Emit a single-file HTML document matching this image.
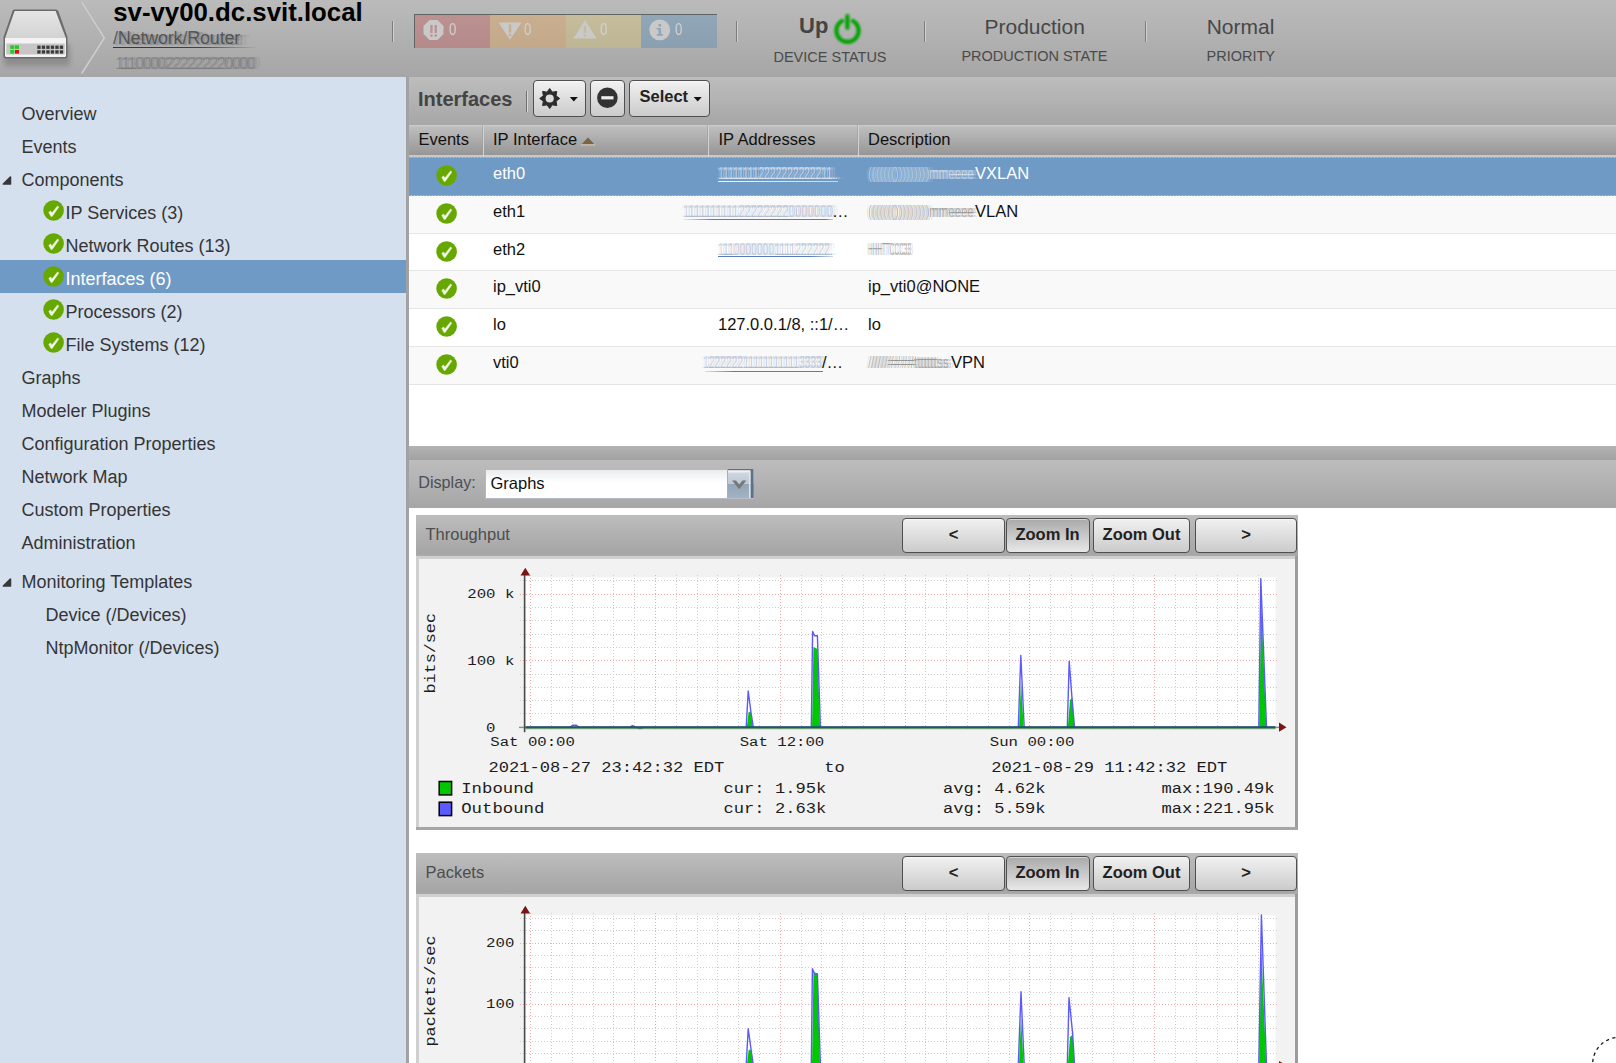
<!DOCTYPE html>
<html><head><meta charset="utf-8"><style>*{box-sizing:border-box;margin:0;padding:0}
html,body{width:1616px;height:1063px;overflow:hidden;background:#fff;font-family:"Liberation Sans",sans-serif}
body{position:relative}
.a{position:absolute}
.t{position:absolute;white-space:pre}
svg{position:absolute;overflow:visible}
</style></head><body>
<div class="a" style="left:0px;top:0px;width:1616px;height:77px;background:linear-gradient(#bbbbbb,#a6a6a6)"></div>
<svg style="left:0;top:0" width="80" height="77" viewBox="0 0 80 77">
<defs><linearGradient id="dtop" x1="0" y1="0" x2="0" y2="1"><stop offset="0" stop-color="#e6e6e6"/><stop offset="1" stop-color="#d2d2d2"/></linearGradient>
<linearGradient id="dfront" x1="0" y1="0" x2="0" y2="1"><stop offset="0" stop-color="#f4f4f4"/><stop offset="1" stop-color="#e8e8e8"/></linearGradient>
<filter id="dsh" x="-30%" y="-30%" width="160%" height="160%"><feGaussianBlur stdDeviation="2.5"/></filter></defs>
<rect x="4" y="44" width="66" height="22" rx="3" fill="#6a6a6a" opacity="0.45" filter="url(#dsh)"/>
<path d="M14 9.5 L56 9.5 Q57.5 9.5 58.3 11 L67.5 37 L67.5 56 Q67.5 58.5 65 58.5 L6 58.5 Q3.5 58.5 3.5 56 L3.5 37 L12.5 11 Q13 9.5 14 9.5 Z" fill="#6b6b6b"/>
<path d="M14.6 11 L55.6 11 L66 38.5 L5 38.5 Z" fill="url(#dtop)"/>
<path d="M5 38 L66 38 L66 55.5 Q66 57 64.5 57 L6.5 57 Q5 57 5 55.5 Z" fill="#f3f3f3"/>
<rect x="6.3" y="43.5" width="58.5" height="11" fill="#c6c6c6"/>
<rect x="10.3" y="45.3" width="4" height="3.6" fill="#22cc22"/><rect x="15" y="45.3" width="4" height="3.6" fill="#22cc22"/>
<rect x="10.3" y="50" width="4" height="3.6" fill="#22cc22"/><rect x="15" y="50" width="4" height="3.6" fill="#dd1111"/>
<g fill="#3a3a3a">
<rect x="37.3" y="45.6" width="3.3" height="3.3"/><rect x="41.8" y="45.6" width="3.3" height="3.3"/><rect x="46.3" y="45.6" width="3.3" height="3.3"/><rect x="50.8" y="45.6" width="3.3" height="3.3"/><rect x="55.3" y="45.6" width="3.3" height="3.3"/><rect x="59.8" y="45.6" width="3.3" height="3.3"/>
<rect x="37.3" y="50.3" width="3.3" height="3.3"/><rect x="41.8" y="50.3" width="3.3" height="3.3"/><rect x="46.3" y="50.3" width="3.3" height="3.3"/><rect x="50.8" y="50.3" width="3.3" height="3.3"/><rect x="55.3" y="50.3" width="3.3" height="3.3"/><rect x="59.8" y="50.3" width="3.3" height="3.3"/>
</g></svg>
<svg style="left:76px;top:0" width="34" height="77" viewBox="0 0 34 77"><path d="M5.5 2.5 L28 38 L5.5 73.5" fill="none" stroke="#cfcfcf" stroke-width="2"/><path d="M4.5 2.5 L27 38 L4.5 73.5" fill="none" stroke="#a5a5a5" stroke-width="1" opacity="0.6"/></svg>
<div class="t" style="left:113.2px;top:0.3px;font-size:25.8px;line-height:25.8px;font-family:'Liberation Sans';color:#000;font-weight:bold;">sv-vy00.dc.svit.local</div>
<div class="t" style="left:113.0px;top:29.3px;font-size:18px;line-height:18px;font-family:'Liberation Sans';color:rgba(60,60,60,0.75);font-weight:normal;text-shadow:2px 1px 1px rgba(80,80,80,0.3),5px 1px 1px rgba(80,80,80,0.2),9px 1px 1px rgba(80,80,80,0.12);letter-spacing:-0.2px">/Network/Router</div>
<div class="a" style="left:113px;top:47px;width:145px;height:1px;background:linear-gradient(90deg,#333,#444 60%,rgba(80,80,80,0))"></div>
<div class="t" style="left:115.0px;top:54.5px;font-size:16.5px;line-height:16.5px;font-family:'Liberation Sans';color:rgba(105,105,105,0.45);font-weight:normal;letter-spacing:-1.75px;text-shadow:2px 0 0 rgba(110,110,110,0.3),5px 0 1px rgba(110,110,110,0.2)">1110000222222220000</div>
<div class="a" style="left:392px;top:21px;width:1px;height:21px;background:#7d7d7d"></div>
<div class="a" style="left:393px;top:21px;width:1px;height:21px;background:#cfcfcf"></div>
<div class="a" style="left:736px;top:21px;width:1px;height:21px;background:#7d7d7d"></div>
<div class="a" style="left:737px;top:21px;width:1px;height:21px;background:#cfcfcf"></div>
<div class="a" style="left:924px;top:21px;width:1px;height:21px;background:#7d7d7d"></div>
<div class="a" style="left:925px;top:21px;width:1px;height:21px;background:#cfcfcf"></div>
<div class="a" style="left:1145px;top:21px;width:1px;height:21px;background:#7d7d7d"></div>
<div class="a" style="left:1146px;top:21px;width:1px;height:21px;background:#cfcfcf"></div>
<div class="a" style="left:414px;top:14px;width:303px;height:34px;background:#5f6466"></div>
<div class="a" style="left:415px;top:15px;width:75px;height:33px;background:linear-gradient(#bc9191,#b48a8a)"></div>
<div class="t" style="left:449.0px;top:21.0px;font-size:16.5px;line-height:16.5px;font-family:'Liberation Sans';color:#d2d2d2;font-weight:normal;transform:scaleX(0.8);transform-origin:left">0</div>
<div class="a" style="left:490px;top:15px;width:76px;height:33px;background:linear-gradient(#caae90,#c3a88a)"></div>
<div class="t" style="left:524.0px;top:21.0px;font-size:16.5px;line-height:16.5px;font-family:'Liberation Sans';color:#d2d2d2;font-weight:normal;transform:scaleX(0.8);transform-origin:left">0</div>
<div class="a" style="left:566px;top:15px;width:75px;height:33px;background:linear-gradient(#c5bd9b,#bdb594)"></div>
<div class="t" style="left:600.0px;top:21.0px;font-size:16.5px;line-height:16.5px;font-family:'Liberation Sans';color:#d2d2d2;font-weight:normal;transform:scaleX(0.8);transform-origin:left">0</div>
<div class="a" style="left:641px;top:15px;width:76px;height:33px;background:linear-gradient(#91a6b6,#8aa0b0)"></div>
<div class="t" style="left:675.0px;top:21.0px;font-size:16.5px;line-height:16.5px;font-family:'Liberation Sans';color:#d2d2d2;font-weight:normal;transform:scaleX(0.8);transform-origin:left">0</div>
<svg style="left:414px;top:14px" width="303" height="34" viewBox="0 0 303 34">
<g fill="#c9c9c9">
<path d="M15.5 6 L23.5 6 L29.5 12 L29.5 20 L23.5 26 L15.5 26 L9.5 20 L9.5 12 Z"/>
<path d="M84.5 8.5 L107.5 8.5 L96 25.8 Z"/>
<path d="M171 6 L182.5 24.5 L159.5 24.5 Z"/>
<circle cx="245.7" cy="15.8" r="10.4"/>
</g>
<g fill="#bc9191"><rect x="16.3" y="11" width="2.3" height="8"/><rect x="20.6" y="11" width="2.3" height="8"/><rect x="16.3" y="20.5" width="2.3" height="2.2"/><rect x="20.6" y="20.5" width="2.3" height="2.2"/></g>
<g fill="#caae90"><rect x="94.8" y="10.5" width="2.4" height="8"/><rect x="94.8" y="20" width="2.4" height="2.3"/></g>
<g fill="#c5bd9b"><rect x="169.8" y="12" width="2.4" height="7"/><rect x="169.8" y="20.3" width="2.4" height="2.3"/></g>
<g fill="#91a6b6"><rect x="244.5" y="14" width="2.6" height="7.5"/><rect x="244.5" y="10" width="2.6" height="2.5"/><rect x="242.7" y="20" width="6.2" height="1.6"/><rect x="242.7" y="14" width="3" height="1.5"/></g>
</svg>
<div class="t" style="left:799.0px;top:15.0px;font-size:22px;line-height:22px;font-family:'Liberation Sans';color:#444;font-weight:bold;">Up</div>
<svg style="left:830px;top:10px" width="36" height="38" viewBox="0 0 36 38"><defs><filter id="glow" x="-30%" y="-30%" width="160%" height="160%"><feGaussianBlur stdDeviation="0.85"/></filter></defs>
<g filter="url(#glow)" fill="none" stroke="#00a400" stroke-width="4.3" stroke-linecap="round"><path d="M12.0 11.0 A11.1 11.1 0 1 0 23.0 11.0"/><path d="M17.4 6.2 L17.4 17.8"/></g></svg>
<div class="t" style="left:530.0px;top:49.5px;font-size:14.5px;line-height:14.5px;font-family:'Liberation Sans';color:#4a4a4a;font-weight:normal;width:600px;text-align:center;">DEVICE STATUS</div>
<div class="t" style="left:734.7px;top:16.0px;font-size:21px;line-height:21px;font-family:'Liberation Sans';color:#474747;font-weight:normal;width:600px;text-align:center;">Production</div>
<div class="t" style="left:734.5px;top:49.4px;font-size:14.5px;line-height:14.5px;font-family:'Liberation Sans';color:#4a4a4a;font-weight:normal;width:600px;text-align:center;">PRODUCTION STATE</div>
<div class="t" style="left:940.5px;top:16.0px;font-size:21px;line-height:21px;font-family:'Liberation Sans';color:#474747;font-weight:normal;width:600px;text-align:center;">Normal</div>
<div class="t" style="left:940.8px;top:49.4px;font-size:14.5px;line-height:14.5px;font-family:'Liberation Sans';color:#4a4a4a;font-weight:normal;width:600px;text-align:center;">PRIORITY</div>
<div class="a" style="left:0px;top:77px;width:406px;height:986px;background:#d4e0ee"></div>
<div class="a" style="left:406px;top:77px;width:3px;height:986px;background:#a2a2a2"></div>
<div class="a" style="left:0px;top:260px;width:406px;height:33px;background:#6f9ac6"></div>
<div class="t" style="left:21.5px;top:104.8px;font-size:18px;line-height:18px;font-family:'Liberation Sans';color:#353535;font-weight:normal;">Overview</div>
<div class="t" style="left:21.5px;top:137.8px;font-size:18px;line-height:18px;font-family:'Liberation Sans';color:#353535;font-weight:normal;">Events</div>
<div class="t" style="left:21.5px;top:170.8px;font-size:18px;line-height:18px;font-family:'Liberation Sans';color:#353535;font-weight:normal;">Components</div>
<svg style="left:2px;top:175px" width="11" height="10" viewBox="0 0 11 10"><path d="M8.4 2.2 L8.4 9 L1.4 9 Z" fill="#383838" stroke="#383838" stroke-width="1.7" stroke-linejoin="round"/></svg>
<div class="t" style="left:65.5px;top:203.8px;font-size:18px;line-height:18px;font-family:'Liberation Sans';color:#353535;font-weight:normal;">IP Services (3)</div>
<svg style="left:42.5px;top:200px" width="21" height="21" viewBox="0 0 21 21"><circle cx="10.6" cy="10.5" r="10.3" fill="#66a800"/><path d="M5.7 12.3 L7.7 10.9 L8.9 13.1 L14.5 5.9 L15.9 7.0 L9.2 16.4 L8.0 16.6 Z" fill="#f2f8e8" stroke="#f2f8e8" stroke-width="0.4" stroke-linejoin="round"/></svg>
<div class="t" style="left:65.5px;top:236.8px;font-size:18px;line-height:18px;font-family:'Liberation Sans';color:#353535;font-weight:normal;">Network Routes (13)</div>
<svg style="left:42.5px;top:233px" width="21" height="21" viewBox="0 0 21 21"><circle cx="10.6" cy="10.5" r="10.3" fill="#66a800"/><path d="M5.7 12.3 L7.7 10.9 L8.9 13.1 L14.5 5.9 L15.9 7.0 L9.2 16.4 L8.0 16.6 Z" fill="#f2f8e8" stroke="#f2f8e8" stroke-width="0.4" stroke-linejoin="round"/></svg>
<div class="t" style="left:65.5px;top:269.8px;font-size:18px;line-height:18px;font-family:'Liberation Sans';color:#fff;font-weight:normal;">Interfaces (6)</div>
<svg style="left:42.5px;top:266px" width="21" height="21" viewBox="0 0 21 21"><circle cx="10.6" cy="10.5" r="10.3" fill="#66a800"/><path d="M5.7 12.3 L7.7 10.9 L8.9 13.1 L14.5 5.9 L15.9 7.0 L9.2 16.4 L8.0 16.6 Z" fill="#f2f8e8" stroke="#f2f8e8" stroke-width="0.4" stroke-linejoin="round"/></svg>
<div class="t" style="left:65.5px;top:302.8px;font-size:18px;line-height:18px;font-family:'Liberation Sans';color:#353535;font-weight:normal;">Processors (2)</div>
<svg style="left:42.5px;top:299px" width="21" height="21" viewBox="0 0 21 21"><circle cx="10.6" cy="10.5" r="10.3" fill="#66a800"/><path d="M5.7 12.3 L7.7 10.9 L8.9 13.1 L14.5 5.9 L15.9 7.0 L9.2 16.4 L8.0 16.6 Z" fill="#f2f8e8" stroke="#f2f8e8" stroke-width="0.4" stroke-linejoin="round"/></svg>
<div class="t" style="left:65.5px;top:335.8px;font-size:18px;line-height:18px;font-family:'Liberation Sans';color:#353535;font-weight:normal;">File Systems (12)</div>
<svg style="left:42.5px;top:332px" width="21" height="21" viewBox="0 0 21 21"><circle cx="10.6" cy="10.5" r="10.3" fill="#66a800"/><path d="M5.7 12.3 L7.7 10.9 L8.9 13.1 L14.5 5.9 L15.9 7.0 L9.2 16.4 L8.0 16.6 Z" fill="#f2f8e8" stroke="#f2f8e8" stroke-width="0.4" stroke-linejoin="round"/></svg>
<div class="t" style="left:21.5px;top:368.8px;font-size:18px;line-height:18px;font-family:'Liberation Sans';color:#353535;font-weight:normal;">Graphs</div>
<div class="t" style="left:21.5px;top:401.8px;font-size:18px;line-height:18px;font-family:'Liberation Sans';color:#353535;font-weight:normal;">Modeler Plugins</div>
<div class="t" style="left:21.5px;top:434.8px;font-size:18px;line-height:18px;font-family:'Liberation Sans';color:#353535;font-weight:normal;">Configuration Properties</div>
<div class="t" style="left:21.5px;top:467.8px;font-size:18px;line-height:18px;font-family:'Liberation Sans';color:#353535;font-weight:normal;">Network Map</div>
<div class="t" style="left:21.5px;top:500.8px;font-size:18px;line-height:18px;font-family:'Liberation Sans';color:#353535;font-weight:normal;">Custom Properties</div>
<div class="t" style="left:21.5px;top:533.8px;font-size:18px;line-height:18px;font-family:'Liberation Sans';color:#353535;font-weight:normal;">Administration</div>
<div class="t" style="left:21.5px;top:572.8px;font-size:18px;line-height:18px;font-family:'Liberation Sans';color:#353535;font-weight:normal;">Monitoring Templates</div>
<svg style="left:2px;top:577px" width="11" height="10" viewBox="0 0 11 10"><path d="M8.4 2.2 L8.4 9 L1.4 9 Z" fill="#383838" stroke="#383838" stroke-width="1.7" stroke-linejoin="round"/></svg>
<div class="t" style="left:45.5px;top:605.8px;font-size:18px;line-height:18px;font-family:'Liberation Sans';color:#353535;font-weight:normal;">Device (/Devices)</div>
<div class="t" style="left:45.5px;top:638.8px;font-size:18px;line-height:18px;font-family:'Liberation Sans';color:#353535;font-weight:normal;">NtpMonitor (/Devices)</div>
<div class="a" style="left:409px;top:77px;width:1207px;height:48px;background:linear-gradient(#bdbdbd,#a7a7a7)"></div>
<div class="t" style="left:418.0px;top:89.1px;font-size:20px;line-height:20px;font-family:'Liberation Sans';color:#444;font-weight:bold;">Interfaces</div>
<div class="a" style="left:526px;top:91px;width:1px;height:21px;background:#6f6f6f"></div>
<div class="a" style="left:527px;top:91px;width:1px;height:21px;background:#d8d8d8"></div>
<div class="a" style="left:533px;top:80px;width:53px;height:37px;border:1px solid #4f4f4f;border-radius:4px;background:linear-gradient(#f1f1f1,#cbcbcb);box-shadow:inset 0 1px 0 rgba(255,255,255,0.5)"></div>
<div class="a" style="left:590px;top:80px;width:35px;height:37px;border:1px solid #4f4f4f;border-radius:4px;background:linear-gradient(#f1f1f1,#cbcbcb);box-shadow:inset 0 1px 0 rgba(255,255,255,0.5)"></div>
<div class="a" style="left:629px;top:80px;width:81px;height:37px;border:1px solid #4f4f4f;border-radius:4px;background:linear-gradient(#f1f1f1,#cbcbcb);box-shadow:inset 0 1px 0 rgba(255,255,255,0.5)"></div>
<svg style="left:0;top:0" width="1616" height="200" viewBox="0 0 1616 200"><path d="M549.70 88.50 L552.34 92.13 L556.77 91.43 L556.07 95.86 L559.70 98.50 L556.07 101.14 L556.77 105.57 L552.34 104.87 L549.70 108.50 L547.06 104.87 L542.63 105.57 L543.33 101.14 L539.70 98.50 L543.33 95.86 L542.63 91.43 L547.06 92.13Z" fill="#2c2c2c" stroke="#2c2c2c" stroke-width="1.0" stroke-linejoin="round"/><circle cx="549.7" cy="98.5" r="4.1" fill="#dcdcdc"/><path d="M569.8 96.9 L577.8 96.9 L573.8 101.6Z" fill="#111"/><circle cx="607.4" cy="97.8" r="10.3" fill="#333"/><rect x="601.3" y="96.2" width="12.2" height="3.2" fill="#eee"/><path d="M693.7 96.9 L701.7 96.9 L697.7 101.6Z" fill="#111"/></svg>
<div class="t" style="left:639.5px;top:87.5px;font-size:16.5px;line-height:16.5px;font-family:'Liberation Sans';color:#222;font-weight:bold;">Select</div>
<div class="a" style="left:409px;top:125px;width:1207px;height:30px;background:linear-gradient(#cdcdcd,#bdbdbd 8%,#969696)"></div>
<div class="a" style="left:409px;top:155px;width:1207px;height:3px;background:#c9c9c9"></div>
<div class="a" style="left:483px;top:125px;width:1px;height:33px;background:#d2d2d2"></div>
<div class="a" style="left:482px;top:125px;width:1px;height:30px;background:#9a9a9a;opacity:0.5"></div>
<div class="a" style="left:708px;top:125px;width:1px;height:33px;background:#d2d2d2"></div>
<div class="a" style="left:707px;top:125px;width:1px;height:30px;background:#9a9a9a;opacity:0.5"></div>
<div class="a" style="left:858px;top:125px;width:1px;height:33px;background:#d2d2d2"></div>
<div class="a" style="left:857px;top:125px;width:1px;height:30px;background:#9a9a9a;opacity:0.5"></div>
<div class="t" style="left:418.5px;top:131.0px;font-size:16.5px;line-height:16.5px;font-family:'Liberation Sans';color:#111;font-weight:normal;">Events</div>
<div class="t" style="left:493.0px;top:131.0px;font-size:16.5px;line-height:16.5px;font-family:'Liberation Sans';color:#111;font-weight:normal;">IP Interface</div>
<svg style="left:580px;top:136px" width="16" height="10" viewBox="0 0 16 10"><path d="M1.4 8.6 L14.6 8.6 L8 1.6Z" fill="#7a6446"/><rect x="1" y="8.2" width="14" height="1.2" fill="#e8dcc8" opacity="0.7"/></svg>
<div class="t" style="left:718.5px;top:131.0px;font-size:16.5px;line-height:16.5px;font-family:'Liberation Sans';color:#111;font-weight:normal;">IP Addresses</div>
<div class="t" style="left:868.0px;top:131.0px;font-size:16.5px;line-height:16.5px;font-family:'Liberation Sans';color:#111;font-weight:normal;">Description</div>
<div class="a" style="left:409px;top:158px;width:1207px;height:38px;background:#6f9ac6"></div>
<svg style="left:435.5px;top:165px" width="21" height="21" viewBox="0 0 21 21"><circle cx="10.6" cy="10.5" r="10.3" fill="#66a800"/><path d="M5.7 12.3 L7.7 10.9 L8.9 13.1 L14.5 5.9 L15.9 7.0 L9.2 16.4 L8.0 16.6 Z" fill="#f2f8e8" stroke="#f2f8e8" stroke-width="0.4" stroke-linejoin="round"/></svg>
<div class="a" style="left:409px;top:196px;width:1207px;height:38px;background:#f9f9f9"></div>
<div class="a" style="left:409px;top:233px;width:1207px;height:1px;background:#e6e6e6"></div>
<svg style="left:435.5px;top:203px" width="21" height="21" viewBox="0 0 21 21"><circle cx="10.6" cy="10.5" r="10.3" fill="#66a800"/><path d="M5.7 12.3 L7.7 10.9 L8.9 13.1 L14.5 5.9 L15.9 7.0 L9.2 16.4 L8.0 16.6 Z" fill="#f2f8e8" stroke="#f2f8e8" stroke-width="0.4" stroke-linejoin="round"/></svg>
<div class="a" style="left:409px;top:234px;width:1207px;height:37px;background:#ffffff"></div>
<div class="a" style="left:409px;top:270px;width:1207px;height:1px;background:#e6e6e6"></div>
<svg style="left:435.5px;top:241px" width="21" height="21" viewBox="0 0 21 21"><circle cx="10.6" cy="10.5" r="10.3" fill="#66a800"/><path d="M5.7 12.3 L7.7 10.9 L8.9 13.1 L14.5 5.9 L15.9 7.0 L9.2 16.4 L8.0 16.6 Z" fill="#f2f8e8" stroke="#f2f8e8" stroke-width="0.4" stroke-linejoin="round"/></svg>
<div class="a" style="left:409px;top:271px;width:1207px;height:38px;background:#f9f9f9"></div>
<div class="a" style="left:409px;top:308px;width:1207px;height:1px;background:#e6e6e6"></div>
<svg style="left:435.5px;top:278px" width="21" height="21" viewBox="0 0 21 21"><circle cx="10.6" cy="10.5" r="10.3" fill="#66a800"/><path d="M5.7 12.3 L7.7 10.9 L8.9 13.1 L14.5 5.9 L15.9 7.0 L9.2 16.4 L8.0 16.6 Z" fill="#f2f8e8" stroke="#f2f8e8" stroke-width="0.4" stroke-linejoin="round"/></svg>
<div class="a" style="left:409px;top:309px;width:1207px;height:38px;background:#ffffff"></div>
<div class="a" style="left:409px;top:346px;width:1207px;height:1px;background:#e6e6e6"></div>
<svg style="left:435.5px;top:316px" width="21" height="21" viewBox="0 0 21 21"><circle cx="10.6" cy="10.5" r="10.3" fill="#66a800"/><path d="M5.7 12.3 L7.7 10.9 L8.9 13.1 L14.5 5.9 L15.9 7.0 L9.2 16.4 L8.0 16.6 Z" fill="#f2f8e8" stroke="#f2f8e8" stroke-width="0.4" stroke-linejoin="round"/></svg>
<div class="a" style="left:409px;top:347px;width:1207px;height:38px;background:#f9f9f9"></div>
<div class="a" style="left:409px;top:384px;width:1207px;height:1px;background:#e6e6e6"></div>
<svg style="left:435.5px;top:354px" width="21" height="21" viewBox="0 0 21 21"><circle cx="10.6" cy="10.5" r="10.3" fill="#66a800"/><path d="M5.7 12.3 L7.7 10.9 L8.9 13.1 L14.5 5.9 L15.9 7.0 L9.2 16.4 L8.0 16.6 Z" fill="#f2f8e8" stroke="#f2f8e8" stroke-width="0.4" stroke-linejoin="round"/></svg>
<div class="a" style="left:409px;top:157px;width:1207px;height:1px;background:repeating-linear-gradient(90deg,#7fa5d2 0 2px,#a9c2e2 2px 3px)"></div>
<div class="a" style="left:409px;top:195px;width:1207px;height:1px;background:repeating-linear-gradient(90deg,#7fa5d2 0 2px,#a9c2e2 2px 3px)"></div>
<div class="t" style="left:493.0px;top:164.8px;font-size:16.5px;line-height:16.5px;font-family:'Liberation Sans';color:#fff;font-weight:normal;">eth0</div>
<div class="t" style="left:493.0px;top:202.8px;font-size:16.5px;line-height:16.5px;font-family:'Liberation Sans';color:#111;font-weight:normal;">eth1</div>
<div class="t" style="left:493.0px;top:240.8px;font-size:16.5px;line-height:16.5px;font-family:'Liberation Sans';color:#111;font-weight:normal;">eth2</div>
<div class="t" style="left:493.0px;top:277.8px;font-size:16.5px;line-height:16.5px;font-family:'Liberation Sans';color:#111;font-weight:normal;">ip_vti0</div>
<div class="t" style="left:493.0px;top:315.8px;font-size:16.5px;line-height:16.5px;font-family:'Liberation Sans';color:#111;font-weight:normal;">lo</div>
<div class="t" style="left:493.0px;top:353.8px;font-size:16.5px;line-height:16.5px;font-family:'Liberation Sans';color:#111;font-weight:normal;">vti0</div>
<svg style="left:0;top:0" width="1616" height="400" viewBox="0 0 1616 400"><text x="718.0" y="178.8" font-family="Liberation Sans" font-size="16.5" textLength="120" lengthAdjust="spacingAndGlyphs" fill="rgb(255,255,255)" fill-opacity="0.550">111111112222222222211..</text><text x="720.5" y="178.8" font-family="Liberation Sans" font-size="16.5" textLength="120" lengthAdjust="spacingAndGlyphs" fill="rgb(255,255,255)" fill-opacity="0.303">111111112222222222211..</text><text x="723.0" y="178.8" font-family="Liberation Sans" font-size="16.5" textLength="120" lengthAdjust="spacingAndGlyphs" fill="rgb(255,255,255)" fill-opacity="0.193">111111112222222222211..</text><text x="716.0" y="178.8" font-family="Liberation Sans" font-size="16.5" textLength="120" lengthAdjust="spacingAndGlyphs" fill="rgb(255,255,255)" fill-opacity="0.165">111111112222222222211..</text></svg>
<div class="a" style="left:718px;top:181px;width:120px;height:1px;background:linear-gradient(90deg,rgba(255,255,255,0.9),rgba(255,255,255,0.6))"></div>
<svg style="left:0;top:0" width="1616" height="400" viewBox="0 0 1616 400"><text x="868.0" y="178.8" font-family="Liberation Sans" font-size="16.5" textLength="106" lengthAdjust="spacingAndGlyphs" fill="rgb(255,255,255)" fill-opacity="0.500">((((((()))))))))mmeeee</text><text x="870.5" y="178.8" font-family="Liberation Sans" font-size="16.5" textLength="106" lengthAdjust="spacingAndGlyphs" fill="rgb(255,255,255)" fill-opacity="0.275">((((((()))))))))mmeeee</text><text x="873.0" y="178.8" font-family="Liberation Sans" font-size="16.5" textLength="106" lengthAdjust="spacingAndGlyphs" fill="rgb(255,255,255)" fill-opacity="0.175">((((((()))))))))mmeeee</text><text x="866.0" y="178.8" font-family="Liberation Sans" font-size="16.5" textLength="106" lengthAdjust="spacingAndGlyphs" fill="rgb(255,255,255)" fill-opacity="0.150">((((((()))))))))mmeeee</text></svg>
<div class="t" style="left:975.0px;top:164.8px;font-size:16.5px;line-height:16.5px;font-family:'Liberation Sans';color:#fff;font-weight:normal;">VXLAN</div>
<svg style="left:0;top:0" width="1616" height="400" viewBox="0 0 1616 400"><text x="683.0" y="216.8" font-family="Liberation Sans" font-size="16.5" textLength="150" lengthAdjust="spacingAndGlyphs" fill="rgb(120,140,180)" fill-opacity="0.380">1111111111222222220000000</text><text x="685.5" y="216.8" font-family="Liberation Sans" font-size="16.5" textLength="150" lengthAdjust="spacingAndGlyphs" fill="rgb(120,140,180)" fill-opacity="0.209">1111111111222222220000000</text><text x="688.0" y="216.8" font-family="Liberation Sans" font-size="16.5" textLength="150" lengthAdjust="spacingAndGlyphs" fill="rgb(120,140,180)" fill-opacity="0.133">1111111111222222220000000</text><text x="681.0" y="216.8" font-family="Liberation Sans" font-size="16.5" textLength="150" lengthAdjust="spacingAndGlyphs" fill="rgb(120,140,180)" fill-opacity="0.114">1111111111222222220000000</text></svg>
<div class="a" style="left:683px;top:219px;width:150px;height:1px;background:linear-gradient(90deg,rgba(80,115,170,0.1),#5a7db5 20%,#5a7db5 95%,rgba(80,115,170,0.3))"></div>
<div class="t" style="left:832.0px;top:202.8px;font-size:16.5px;line-height:16.5px;font-family:'Liberation Sans';color:#111;font-weight:normal;">…</div>
<svg style="left:0;top:0" width="1616" height="400" viewBox="0 0 1616 400"><text x="868.0" y="216.8" font-family="Liberation Sans" font-size="16.5" textLength="106" lengthAdjust="spacingAndGlyphs" fill="rgb(90,90,90)" fill-opacity="0.420">((((((()))))))))mmeeee</text><text x="870.5" y="216.8" font-family="Liberation Sans" font-size="16.5" textLength="106" lengthAdjust="spacingAndGlyphs" fill="rgb(90,90,90)" fill-opacity="0.231">((((((()))))))))mmeeee</text><text x="873.0" y="216.8" font-family="Liberation Sans" font-size="16.5" textLength="106" lengthAdjust="spacingAndGlyphs" fill="rgb(90,90,90)" fill-opacity="0.147">((((((()))))))))mmeeee</text><text x="866.0" y="216.8" font-family="Liberation Sans" font-size="16.5" textLength="106" lengthAdjust="spacingAndGlyphs" fill="rgb(90,90,90)" fill-opacity="0.126">((((((()))))))))mmeeee</text></svg>
<div class="t" style="left:975.0px;top:202.8px;font-size:16.5px;line-height:16.5px;font-family:'Liberation Sans';color:#111;font-weight:normal;">VLAN</div>
<svg style="left:0;top:0" width="1616" height="400" viewBox="0 0 1616 400"><text x="718.0" y="254.8" font-family="Liberation Sans" font-size="16.5" textLength="115" lengthAdjust="spacingAndGlyphs" fill="rgb(120,140,180)" fill-opacity="0.400">11100000001111222222.</text><text x="720.5" y="254.8" font-family="Liberation Sans" font-size="16.5" textLength="115" lengthAdjust="spacingAndGlyphs" fill="rgb(120,140,180)" fill-opacity="0.220">11100000001111222222.</text><text x="723.0" y="254.8" font-family="Liberation Sans" font-size="16.5" textLength="115" lengthAdjust="spacingAndGlyphs" fill="rgb(120,140,180)" fill-opacity="0.140">11100000001111222222.</text><text x="716.0" y="254.8" font-family="Liberation Sans" font-size="16.5" textLength="115" lengthAdjust="spacingAndGlyphs" fill="rgb(120,140,180)" fill-opacity="0.120">11100000001111222222.</text></svg>
<div class="a" style="left:718px;top:256px;width:115px;height:1px;background:linear-gradient(90deg,#5a7db5,#5a7db5 80%,rgba(90,125,181,0.3))"></div>
<svg style="left:0;top:0" width="1616" height="400" viewBox="0 0 1616 400"><text x="868.0" y="254.8" font-family="Liberation Sans" font-size="16.5" textLength="43" lengthAdjust="spacingAndGlyphs" fill="rgb(90,90,90)" fill-opacity="0.450">HHHTTCCC33</text><text x="870.0" y="254.8" font-family="Liberation Sans" font-size="16.5" textLength="43" lengthAdjust="spacingAndGlyphs" fill="rgb(90,90,90)" fill-opacity="0.225">HHHTTCCC33</text><text x="866.5" y="254.8" font-family="Liberation Sans" font-size="16.5" textLength="43" lengthAdjust="spacingAndGlyphs" fill="rgb(90,90,90)" fill-opacity="0.135">HHHTTCCC33</text></svg>
<div class="t" style="left:868.0px;top:277.8px;font-size:16.5px;line-height:16.5px;font-family:'Liberation Sans';color:#111;font-weight:normal;">ip_vti0@NONE</div>
<div class="t" style="left:718.0px;top:315.8px;font-size:16.5px;line-height:16.5px;font-family:'Liberation Sans';color:#111;font-weight:normal;">127.0.0.1/8, ::1/…</div>
<div class="t" style="left:868.0px;top:315.8px;font-size:16.5px;line-height:16.5px;font-family:'Liberation Sans';color:#111;font-weight:normal;">lo</div>
<svg style="left:0;top:0" width="1616" height="400" viewBox="0 0 1616 400"><text x="703.0" y="367.8" font-family="Liberation Sans" font-size="16.5" textLength="119" lengthAdjust="spacingAndGlyphs" fill="rgb(120,140,180)" fill-opacity="0.380">1222222111111111113333</text><text x="705.5" y="367.8" font-family="Liberation Sans" font-size="16.5" textLength="119" lengthAdjust="spacingAndGlyphs" fill="rgb(120,140,180)" fill-opacity="0.209">1222222111111111113333</text><text x="708.0" y="367.8" font-family="Liberation Sans" font-size="16.5" textLength="119" lengthAdjust="spacingAndGlyphs" fill="rgb(120,140,180)" fill-opacity="0.133">1222222111111111113333</text><text x="701.0" y="367.8" font-family="Liberation Sans" font-size="16.5" textLength="119" lengthAdjust="spacingAndGlyphs" fill="rgb(120,140,180)" fill-opacity="0.114">1222222111111111113333</text></svg>
<div class="t" style="left:822.0px;top:353.8px;font-size:16.5px;line-height:16.5px;font-family:'Liberation Sans';color:#111;font-weight:normal;">/…</div>
<div class="a" style="left:705px;top:371px;width:118px;height:1px;background:linear-gradient(90deg,rgba(90,125,181,0.2),#5a7db5 25%,#5a7db5)"></div>
<svg style="left:0;top:0" width="1616" height="400" viewBox="0 0 1616 400"><text x="868.0" y="367.8" font-family="Liberation Sans" font-size="16.5" textLength="81" lengthAdjust="spacingAndGlyphs" fill="rgb(90,90,90)" fill-opacity="0.420">//////####tttttttss</text><text x="870.5" y="367.8" font-family="Liberation Sans" font-size="16.5" textLength="81" lengthAdjust="spacingAndGlyphs" fill="rgb(90,90,90)" fill-opacity="0.231">//////####tttttttss</text><text x="873.0" y="367.8" font-family="Liberation Sans" font-size="16.5" textLength="81" lengthAdjust="spacingAndGlyphs" fill="rgb(90,90,90)" fill-opacity="0.147">//////####tttttttss</text><text x="866.0" y="367.8" font-family="Liberation Sans" font-size="16.5" textLength="81" lengthAdjust="spacingAndGlyphs" fill="rgb(90,90,90)" fill-opacity="0.126">//////####tttttttss</text></svg>
<div class="t" style="left:951.0px;top:353.8px;font-size:16.5px;line-height:16.5px;font-family:'Liberation Sans';color:#111;font-weight:normal;">VPN</div>
<div class="a" style="left:409px;top:385px;width:1207px;height:61px;background:#fff"></div>
<div class="a" style="left:409px;top:446px;width:1207px;height:14px;background:linear-gradient(#b3b3b3,#a2a2a2)"></div>
<div class="a" style="left:409px;top:460px;width:1207px;height:48px;background:linear-gradient(#bdbdbd,#a6a6a6)"></div>
<div class="t" style="left:418.2px;top:473.8px;font-size:16.2px;line-height:16.2px;font-family:'Liberation Sans';color:#4b4f56;font-weight:normal;">Display:</div>
<div class="a" style="left:485px;top:469px;width:243px;height:30px;background:linear-gradient(#e9eced,#ffffff 45%);border:1px solid #b5b8c8"></div>
<div class="t" style="left:490.5px;top:474.8px;font-size:16.5px;line-height:16.5px;font-family:'Liberation Sans';color:#111;font-weight:normal;">Graphs</div>
<svg style="left:727px;top:469px" width="28" height="30" viewBox="0 0 28 30">
<defs><linearGradient id="trg" x1="0" y1="0" x2="0" y2="1"><stop offset="0" stop-color="#d3dae2"/><stop offset="0.5" stop-color="#bfc9d4"/><stop offset="0.5" stop-color="#93a5b6"/><stop offset="1" stop-color="#a2b3c4"/></linearGradient></defs>
<rect x="0" y="0" width="27" height="30" fill="url(#trg)"/>
<rect x="0" y="0" width="26" height="1" fill="#5d7188"/>
<rect x="23.5" y="0" width="3" height="30" fill="#5d7188"/>
<rect x="22" y="2" width="1.5" height="28" fill="#e2e6ea"/>
<rect x="0" y="2" width="22" height="1.5" fill="#eef1f4"/>
<rect x="0" y="0" width="1" height="30" fill="#a8aec0"/>
<rect x="0" y="29" width="27" height="1" fill="#b8bccc"/>
<path d="M5 11.5 L9 11.5 L12.2 15.6 L15.4 11.5 L19.4 11.5 L12.2 20.3 Z" fill="#787878"/>
</svg>
<div class="a" style="left:409px;top:508px;width:1207px;height:555px;background:#fff"></div>
<div class="a" style="left:416px;top:515px;width:882px;height:39px;background:linear-gradient(#bdbdbd,#a5a5a5)"></div>
<div class="a" style="left:416px;top:554px;width:882px;height:2px;background:#a9a9a9"></div>
<div class="t" style="left:425.5px;top:525.5px;font-size:16.5px;line-height:16.5px;font-family:'Liberation Sans';color:#4d4d4d;font-weight:normal;">Throughput</div>
<div class="a" style="left:902px;top:518px;width:103px;height:35px;border:1px solid #4f4f4f;border-radius:4px;background:linear-gradient(#f1f1f1,#cbcbcb);box-shadow:inset 0 1px 0 rgba(255,255,255,0.5)"></div>
<div class="a" style="left:1006px;top:518px;width:84px;height:35px;border:1px solid #4f4f4f;border-radius:4px;background:linear-gradient(#a9a9a9,#e8e8e8);box-shadow:inset 0 1px 0 rgba(255,255,255,0.5)"></div>
<div class="a" style="left:1093px;top:518px;width:97px;height:35px;border:1px solid #4f4f4f;border-radius:4px;background:linear-gradient(#f1f1f1,#cbcbcb);box-shadow:inset 0 1px 0 rgba(255,255,255,0.5)"></div>
<div class="a" style="left:1195px;top:518px;width:102px;height:35px;border:1px solid #4f4f4f;border-radius:4px;background:linear-gradient(#f1f1f1,#cbcbcb);box-shadow:inset 0 1px 0 rgba(255,255,255,0.5)"></div>
<div class="t" style="left:653.5px;top:525.5px;font-size:16.5px;line-height:16.5px;font-family:'Liberation Sans';color:#222;font-weight:bold;width:600px;text-align:center;">&lt;</div>
<div class="t" style="left:747.5px;top:525.5px;font-size:16.5px;line-height:16.5px;font-family:'Liberation Sans';color:#222;font-weight:bold;width:600px;text-align:center;">Zoom In</div>
<div class="t" style="left:841.5px;top:525.5px;font-size:16.5px;line-height:16.5px;font-family:'Liberation Sans';color:#222;font-weight:bold;width:600px;text-align:center;">Zoom Out</div>
<div class="t" style="left:946.0px;top:525.5px;font-size:16.5px;line-height:16.5px;font-family:'Liberation Sans';color:#222;font-weight:bold;width:600px;text-align:center;">&gt;</div>
<div class="a" style="left:416px;top:556px;width:882px;height:274px;background:#cfcfcf"></div>
<div class="a" style="left:419px;top:559px;width:876px;height:268px;background:#f2f2f2"></div>
<div class="a" style="left:1295px;top:556px;width:3px;height:274px;background:#9c9c9c"></div>
<div class="a" style="left:416px;top:827px;width:882px;height:3px;background:#a6a6a6"></div>
<svg style="left:0;top:0" width="1616" height="1063" viewBox="0 0 1616 1063"><g transform="translate(0,0)"><rect x="525.5" y="577.5" width="750" height="150" fill="#fff"/><line x1="551.5" y1="575" x2="551.5" y2="731" stroke="#cdcdcd" stroke-width="1" stroke-dasharray="1 2"/><line x1="572.5" y1="575" x2="572.5" y2="731" stroke="#cdcdcd" stroke-width="1" stroke-dasharray="1 2"/><line x1="593.5" y1="575" x2="593.5" y2="731" stroke="#cdcdcd" stroke-width="1" stroke-dasharray="1 2"/><line x1="613.5" y1="575" x2="613.5" y2="731" stroke="#cdcdcd" stroke-width="1" stroke-dasharray="1 2"/><line x1="634.5" y1="575" x2="634.5" y2="731" stroke="#cdcdcd" stroke-width="1" stroke-dasharray="1 2"/><line x1="676.5" y1="575" x2="676.5" y2="731" stroke="#cdcdcd" stroke-width="1" stroke-dasharray="1 2"/><line x1="697.5" y1="575" x2="697.5" y2="731" stroke="#cdcdcd" stroke-width="1" stroke-dasharray="1 2"/><line x1="717.5" y1="575" x2="717.5" y2="731" stroke="#cdcdcd" stroke-width="1" stroke-dasharray="1 2"/><line x1="738.5" y1="575" x2="738.5" y2="731" stroke="#cdcdcd" stroke-width="1" stroke-dasharray="1 2"/><line x1="759.5" y1="575" x2="759.5" y2="731" stroke="#cdcdcd" stroke-width="1" stroke-dasharray="1 2"/><line x1="801.5" y1="575" x2="801.5" y2="731" stroke="#cdcdcd" stroke-width="1" stroke-dasharray="1 2"/><line x1="821.5" y1="575" x2="821.5" y2="731" stroke="#cdcdcd" stroke-width="1" stroke-dasharray="1 2"/><line x1="842.5" y1="575" x2="842.5" y2="731" stroke="#cdcdcd" stroke-width="1" stroke-dasharray="1 2"/><line x1="863.5" y1="575" x2="863.5" y2="731" stroke="#cdcdcd" stroke-width="1" stroke-dasharray="1 2"/><line x1="884.5" y1="575" x2="884.5" y2="731" stroke="#cdcdcd" stroke-width="1" stroke-dasharray="1 2"/><line x1="925.5" y1="575" x2="925.5" y2="731" stroke="#cdcdcd" stroke-width="1" stroke-dasharray="1 2"/><line x1="946.5" y1="575" x2="946.5" y2="731" stroke="#cdcdcd" stroke-width="1" stroke-dasharray="1 2"/><line x1="967.5" y1="575" x2="967.5" y2="731" stroke="#cdcdcd" stroke-width="1" stroke-dasharray="1 2"/><line x1="988.5" y1="575" x2="988.5" y2="731" stroke="#cdcdcd" stroke-width="1" stroke-dasharray="1 2"/><line x1="1009.5" y1="575" x2="1009.5" y2="731" stroke="#cdcdcd" stroke-width="1" stroke-dasharray="1 2"/><line x1="1050.5" y1="575" x2="1050.5" y2="731" stroke="#cdcdcd" stroke-width="1" stroke-dasharray="1 2"/><line x1="1071.5" y1="575" x2="1071.5" y2="731" stroke="#cdcdcd" stroke-width="1" stroke-dasharray="1 2"/><line x1="1092.5" y1="575" x2="1092.5" y2="731" stroke="#cdcdcd" stroke-width="1" stroke-dasharray="1 2"/><line x1="1113.5" y1="575" x2="1113.5" y2="731" stroke="#cdcdcd" stroke-width="1" stroke-dasharray="1 2"/><line x1="1133.5" y1="575" x2="1133.5" y2="731" stroke="#cdcdcd" stroke-width="1" stroke-dasharray="1 2"/><line x1="1175.5" y1="575" x2="1175.5" y2="731" stroke="#cdcdcd" stroke-width="1" stroke-dasharray="1 2"/><line x1="1196.5" y1="575" x2="1196.5" y2="731" stroke="#cdcdcd" stroke-width="1" stroke-dasharray="1 2"/><line x1="1217.5" y1="575" x2="1217.5" y2="731" stroke="#cdcdcd" stroke-width="1" stroke-dasharray="1 2"/><line x1="1237.5" y1="575" x2="1237.5" y2="731" stroke="#cdcdcd" stroke-width="1" stroke-dasharray="1 2"/><line x1="1258.5" y1="575" x2="1258.5" y2="731" stroke="#cdcdcd" stroke-width="1" stroke-dasharray="1 2"/><line x1="520" y1="713.5" x2="1278" y2="713.5" stroke="#cdcdcd" stroke-width="1" stroke-dasharray="1 2"/><line x1="520" y1="700.5" x2="1278" y2="700.5" stroke="#cdcdcd" stroke-width="1" stroke-dasharray="1 2"/><line x1="520" y1="687.5" x2="1278" y2="687.5" stroke="#cdcdcd" stroke-width="1" stroke-dasharray="1 2"/><line x1="520" y1="674.5" x2="1278" y2="674.5" stroke="#cdcdcd" stroke-width="1" stroke-dasharray="1 2"/><line x1="520" y1="647.5" x2="1278" y2="647.5" stroke="#cdcdcd" stroke-width="1" stroke-dasharray="1 2"/><line x1="520" y1="634.5" x2="1278" y2="634.5" stroke="#cdcdcd" stroke-width="1" stroke-dasharray="1 2"/><line x1="520" y1="620.5" x2="1278" y2="620.5" stroke="#cdcdcd" stroke-width="1" stroke-dasharray="1 2"/><line x1="520" y1="607.5" x2="1278" y2="607.5" stroke="#cdcdcd" stroke-width="1" stroke-dasharray="1 2"/><line x1="520" y1="580.5" x2="1278" y2="580.5" stroke="#cdcdcd" stroke-width="1" stroke-dasharray="1 2"/><line x1="530.5" y1="575" x2="530.5" y2="731" stroke="#f0a8a8" stroke-width="1" stroke-dasharray="1 2"/><line x1="655.5" y1="575" x2="655.5" y2="731" stroke="#f0a8a8" stroke-width="1" stroke-dasharray="1 2"/><line x1="780.5" y1="575" x2="780.5" y2="731" stroke="#f0a8a8" stroke-width="1" stroke-dasharray="1 2"/><line x1="905.5" y1="575" x2="905.5" y2="731" stroke="#f0a8a8" stroke-width="1" stroke-dasharray="1 2"/><line x1="1029.5" y1="575" x2="1029.5" y2="731" stroke="#f0a8a8" stroke-width="1" stroke-dasharray="1 2"/><line x1="1154.5" y1="575" x2="1154.5" y2="731" stroke="#f0a8a8" stroke-width="1" stroke-dasharray="1 2"/><line x1="520" y1="660.5" x2="1278" y2="660.5" stroke="#f0a8a8" stroke-width="1" stroke-dasharray="1 2"/><line x1="520" y1="594.5" x2="1278" y2="594.5" stroke="#f0a8a8" stroke-width="1" stroke-dasharray="1 2"/><path d="M746.8 727.2 L748.6 712 L750.6 711.5 L753.2 727.2Z" fill="#00c800"/><path d="M746.2 727.2 L748.2 691 L751 712.5 L753.3 727.2" fill="none" stroke="#5a5aff" stroke-width="1.4" stroke-linejoin="round"/><path d="M812 727.2 L813.4 647 L817.5 649 L820 727.2Z" fill="#00c800"/><path d="M811.3 727.2 L812.6 631.5 L814.6 635.8 L817.4 635.8 L820.4 727.2" fill="none" stroke="#5a5aff" stroke-width="1.4" stroke-linejoin="round"/><path d="M1019 727.2 L1021 680 L1023.6 727.2Z" fill="#00c800"/><path d="M1018.3 727.2 L1020.8 655.5 L1024.2 727.2" fill="none" stroke="#5a5aff" stroke-width="1.4" stroke-linejoin="round"/><path d="M1067.8 727.2 L1070 700 L1072.3 697.5 L1074.5 727.2Z" fill="#00c800"/><path d="M1067.3 727.2 L1069.2 661.2 L1072 698 L1074.5 727.2" fill="none" stroke="#5a5aff" stroke-width="1.4" stroke-linejoin="round"/><path d="M1259.2 727.2 L1261.2 600 L1266.3 727.2Z" fill="#00c800"/><path d="M1258.8 727.2 L1260.8 578.6 L1266.5 727.2" fill="none" stroke="#5a5aff" stroke-width="1.4" stroke-linejoin="round"/><path d="M570 727.2 L572.5 725.3 L576.5 725.3 L579 727.2" fill="none" stroke="#5a5aff" stroke-width="1.4" stroke-linejoin="round"/><path d="M630 727.2 L632.5 725.5 L635 727.2 L640 728.6 L645 727.2" fill="none" stroke="#5a5aff" stroke-width="1.4" stroke-linejoin="round"/><rect x="525.5" y="726.2" width="750" height="2" fill="#1d4f86"/><rect x="525.5" y="728.2" width="750" height="1" fill="#3a8a3a" opacity="0.8"/><rect x="523.8" y="574" width="1.6" height="158.2" fill="#4a4a4a"/><path d="M520.5 575.6 L530.1 575.6 L525.3 567.8Z" fill="#7a1414"/><rect x="519" y="726.7" width="763" height="1.4" fill="#4a4a4a" opacity="0.6"/><path d="M1279 722.6 L1279 731.8 L1286.5 727.2Z" fill="#7a1414"/><text x="467.3" y="598.0" font-family="Liberation Mono" font-size="13.7" textLength="47.0" lengthAdjust="spacingAndGlyphs" fill="#1c1c1c" text-anchor="start">200&#160;k</text><text x="467.3" y="665.1" font-family="Liberation Mono" font-size="13.7" textLength="47.0" lengthAdjust="spacingAndGlyphs" fill="#1c1c1c" text-anchor="start">100&#160;k</text><text x="467.3" y="732.0" font-family="Liberation Mono" font-size="13.7" textLength="47.0" lengthAdjust="spacingAndGlyphs" fill="#1c1c1c" text-anchor="start">&#160;&#160;0&#160;&#160;</text><text transform="translate(434.6,653.3) rotate(-90)" font-family="Liberation Mono" font-size="15.5" textLength="80.5" lengthAdjust="spacingAndGlyphs" fill="#1c1c1c" text-anchor="middle">bits/sec</text><text x="490.3" y="746.0" font-family="Liberation Mono" font-size="13.7" textLength="84.6" lengthAdjust="spacingAndGlyphs" fill="#1c1c1c" text-anchor="start">Sat&#160;00:00</text><text x="739.7" y="746.0" font-family="Liberation Mono" font-size="13.7" textLength="84.6" lengthAdjust="spacingAndGlyphs" fill="#1c1c1c" text-anchor="start">Sat&#160;12:00</text><text x="989.8" y="746.0" font-family="Liberation Mono" font-size="13.7" textLength="84.6" lengthAdjust="spacingAndGlyphs" fill="#1c1c1c" text-anchor="start">Sun&#160;00:00</text></g></svg>
<svg style="left:0;top:0" width="1616" height="1063" viewBox="0 0 1616 1063"><g transform="translate(0,0)"><text x="488.4" y="771.9" font-family="Liberation Mono" font-size="15.4" textLength="236.0" lengthAdjust="spacingAndGlyphs" fill="#1c1c1c" text-anchor="start">2021-08-27&#160;23:42:32&#160;EDT</text><text x="824.3" y="771.9" font-family="Liberation Mono" font-size="15.4" textLength="20.5" lengthAdjust="spacingAndGlyphs" fill="#1c1c1c" text-anchor="start">to</text><text x="991.3" y="771.9" font-family="Liberation Mono" font-size="15.4" textLength="236.0" lengthAdjust="spacingAndGlyphs" fill="#1c1c1c" text-anchor="start">2021-08-29&#160;11:42:32&#160;EDT</text><rect x="439.2" y="781.5" width="12.4" height="13.4" fill="#00c800" stroke="#000" stroke-width="1.5"/><text x="461.2" y="792.5" font-family="Liberation Mono" font-size="15.4" textLength="72.8" lengthAdjust="spacingAndGlyphs" fill="#1c1c1c" text-anchor="start">Inbound</text><text x="723.6" y="792.5" font-family="Liberation Mono" font-size="15.4" textLength="102.6" lengthAdjust="spacingAndGlyphs" fill="#1c1c1c" text-anchor="start">cur:&#160;1.95k</text><text x="943.0" y="792.5" font-family="Liberation Mono" font-size="15.4" textLength="102.6" lengthAdjust="spacingAndGlyphs" fill="#1c1c1c" text-anchor="start">avg:&#160;4.62k</text><text x="1161.6" y="792.5" font-family="Liberation Mono" font-size="15.4" textLength="112.9" lengthAdjust="spacingAndGlyphs" fill="#1c1c1c" text-anchor="start">max:190.49k</text><rect x="439.2" y="802.2" width="12.4" height="13.4" fill="#5a5aff" stroke="#000" stroke-width="1.5"/><text x="461.2" y="813.2" font-family="Liberation Mono" font-size="15.4" textLength="83.2" lengthAdjust="spacingAndGlyphs" fill="#1c1c1c" text-anchor="start">Outbound</text><text x="723.6" y="813.2" font-family="Liberation Mono" font-size="15.4" textLength="102.6" lengthAdjust="spacingAndGlyphs" fill="#1c1c1c" text-anchor="start">cur:&#160;2.63k</text><text x="943.0" y="813.2" font-family="Liberation Mono" font-size="15.4" textLength="102.6" lengthAdjust="spacingAndGlyphs" fill="#1c1c1c" text-anchor="start">avg:&#160;5.59k</text><text x="1161.6" y="813.2" font-family="Liberation Mono" font-size="15.4" textLength="112.9" lengthAdjust="spacingAndGlyphs" fill="#1c1c1c" text-anchor="start">max:221.95k</text></g></svg>
<div class="a" style="left:416px;top:853px;width:882px;height:39px;background:linear-gradient(#bdbdbd,#a5a5a5)"></div>
<div class="a" style="left:416px;top:892px;width:882px;height:2px;background:#a9a9a9"></div>
<div class="t" style="left:425.5px;top:863.5px;font-size:16.5px;line-height:16.5px;font-family:'Liberation Sans';color:#4d4d4d;font-weight:normal;">Packets</div>
<div class="a" style="left:902px;top:856px;width:103px;height:35px;border:1px solid #4f4f4f;border-radius:4px;background:linear-gradient(#f1f1f1,#cbcbcb);box-shadow:inset 0 1px 0 rgba(255,255,255,0.5)"></div>
<div class="a" style="left:1006px;top:856px;width:84px;height:35px;border:1px solid #4f4f4f;border-radius:4px;background:linear-gradient(#a9a9a9,#e8e8e8);box-shadow:inset 0 1px 0 rgba(255,255,255,0.5)"></div>
<div class="a" style="left:1093px;top:856px;width:97px;height:35px;border:1px solid #4f4f4f;border-radius:4px;background:linear-gradient(#f1f1f1,#cbcbcb);box-shadow:inset 0 1px 0 rgba(255,255,255,0.5)"></div>
<div class="a" style="left:1195px;top:856px;width:102px;height:35px;border:1px solid #4f4f4f;border-radius:4px;background:linear-gradient(#f1f1f1,#cbcbcb);box-shadow:inset 0 1px 0 rgba(255,255,255,0.5)"></div>
<div class="t" style="left:653.5px;top:863.5px;font-size:16.5px;line-height:16.5px;font-family:'Liberation Sans';color:#222;font-weight:bold;width:600px;text-align:center;">&lt;</div>
<div class="t" style="left:747.5px;top:863.5px;font-size:16.5px;line-height:16.5px;font-family:'Liberation Sans';color:#222;font-weight:bold;width:600px;text-align:center;">Zoom In</div>
<div class="t" style="left:841.5px;top:863.5px;font-size:16.5px;line-height:16.5px;font-family:'Liberation Sans';color:#222;font-weight:bold;width:600px;text-align:center;">Zoom Out</div>
<div class="t" style="left:946.0px;top:863.5px;font-size:16.5px;line-height:16.5px;font-family:'Liberation Sans';color:#222;font-weight:bold;width:600px;text-align:center;">&gt;</div>
<div class="a" style="left:416px;top:894px;width:882px;height:274px;background:#cfcfcf"></div>
<div class="a" style="left:419px;top:897px;width:876px;height:268px;background:#f2f2f2"></div>
<div class="a" style="left:1295px;top:894px;width:3px;height:274px;background:#9c9c9c"></div>
<div class="a" style="left:416px;top:1165px;width:882px;height:3px;background:#a6a6a6"></div>
<svg style="left:0;top:0" width="1616" height="1063" viewBox="0 0 1616 1063"><g transform="translate(0,338)"><rect x="525.5" y="577.5" width="750" height="150" fill="#fff"/><line x1="551.5" y1="575" x2="551.5" y2="731" stroke="#cdcdcd" stroke-width="1" stroke-dasharray="1 2"/><line x1="572.5" y1="575" x2="572.5" y2="731" stroke="#cdcdcd" stroke-width="1" stroke-dasharray="1 2"/><line x1="593.5" y1="575" x2="593.5" y2="731" stroke="#cdcdcd" stroke-width="1" stroke-dasharray="1 2"/><line x1="613.5" y1="575" x2="613.5" y2="731" stroke="#cdcdcd" stroke-width="1" stroke-dasharray="1 2"/><line x1="634.5" y1="575" x2="634.5" y2="731" stroke="#cdcdcd" stroke-width="1" stroke-dasharray="1 2"/><line x1="676.5" y1="575" x2="676.5" y2="731" stroke="#cdcdcd" stroke-width="1" stroke-dasharray="1 2"/><line x1="697.5" y1="575" x2="697.5" y2="731" stroke="#cdcdcd" stroke-width="1" stroke-dasharray="1 2"/><line x1="717.5" y1="575" x2="717.5" y2="731" stroke="#cdcdcd" stroke-width="1" stroke-dasharray="1 2"/><line x1="738.5" y1="575" x2="738.5" y2="731" stroke="#cdcdcd" stroke-width="1" stroke-dasharray="1 2"/><line x1="759.5" y1="575" x2="759.5" y2="731" stroke="#cdcdcd" stroke-width="1" stroke-dasharray="1 2"/><line x1="801.5" y1="575" x2="801.5" y2="731" stroke="#cdcdcd" stroke-width="1" stroke-dasharray="1 2"/><line x1="821.5" y1="575" x2="821.5" y2="731" stroke="#cdcdcd" stroke-width="1" stroke-dasharray="1 2"/><line x1="842.5" y1="575" x2="842.5" y2="731" stroke="#cdcdcd" stroke-width="1" stroke-dasharray="1 2"/><line x1="863.5" y1="575" x2="863.5" y2="731" stroke="#cdcdcd" stroke-width="1" stroke-dasharray="1 2"/><line x1="884.5" y1="575" x2="884.5" y2="731" stroke="#cdcdcd" stroke-width="1" stroke-dasharray="1 2"/><line x1="925.5" y1="575" x2="925.5" y2="731" stroke="#cdcdcd" stroke-width="1" stroke-dasharray="1 2"/><line x1="946.5" y1="575" x2="946.5" y2="731" stroke="#cdcdcd" stroke-width="1" stroke-dasharray="1 2"/><line x1="967.5" y1="575" x2="967.5" y2="731" stroke="#cdcdcd" stroke-width="1" stroke-dasharray="1 2"/><line x1="988.5" y1="575" x2="988.5" y2="731" stroke="#cdcdcd" stroke-width="1" stroke-dasharray="1 2"/><line x1="1009.5" y1="575" x2="1009.5" y2="731" stroke="#cdcdcd" stroke-width="1" stroke-dasharray="1 2"/><line x1="1050.5" y1="575" x2="1050.5" y2="731" stroke="#cdcdcd" stroke-width="1" stroke-dasharray="1 2"/><line x1="1071.5" y1="575" x2="1071.5" y2="731" stroke="#cdcdcd" stroke-width="1" stroke-dasharray="1 2"/><line x1="1092.5" y1="575" x2="1092.5" y2="731" stroke="#cdcdcd" stroke-width="1" stroke-dasharray="1 2"/><line x1="1113.5" y1="575" x2="1113.5" y2="731" stroke="#cdcdcd" stroke-width="1" stroke-dasharray="1 2"/><line x1="1133.5" y1="575" x2="1133.5" y2="731" stroke="#cdcdcd" stroke-width="1" stroke-dasharray="1 2"/><line x1="1175.5" y1="575" x2="1175.5" y2="731" stroke="#cdcdcd" stroke-width="1" stroke-dasharray="1 2"/><line x1="1196.5" y1="575" x2="1196.5" y2="731" stroke="#cdcdcd" stroke-width="1" stroke-dasharray="1 2"/><line x1="1217.5" y1="575" x2="1217.5" y2="731" stroke="#cdcdcd" stroke-width="1" stroke-dasharray="1 2"/><line x1="1237.5" y1="575" x2="1237.5" y2="731" stroke="#cdcdcd" stroke-width="1" stroke-dasharray="1 2"/><line x1="1258.5" y1="575" x2="1258.5" y2="731" stroke="#cdcdcd" stroke-width="1" stroke-dasharray="1 2"/><line x1="520" y1="715.5" x2="1278" y2="715.5" stroke="#cdcdcd" stroke-width="1" stroke-dasharray="1 2"/><line x1="520" y1="703.5" x2="1278" y2="703.5" stroke="#cdcdcd" stroke-width="1" stroke-dasharray="1 2"/><line x1="520" y1="690.5" x2="1278" y2="690.5" stroke="#cdcdcd" stroke-width="1" stroke-dasharray="1 2"/><line x1="520" y1="678.5" x2="1278" y2="678.5" stroke="#cdcdcd" stroke-width="1" stroke-dasharray="1 2"/><line x1="520" y1="654.5" x2="1278" y2="654.5" stroke="#cdcdcd" stroke-width="1" stroke-dasharray="1 2"/><line x1="520" y1="641.5" x2="1278" y2="641.5" stroke="#cdcdcd" stroke-width="1" stroke-dasharray="1 2"/><line x1="520" y1="629.5" x2="1278" y2="629.5" stroke="#cdcdcd" stroke-width="1" stroke-dasharray="1 2"/><line x1="520" y1="617.5" x2="1278" y2="617.5" stroke="#cdcdcd" stroke-width="1" stroke-dasharray="1 2"/><line x1="520" y1="592.5" x2="1278" y2="592.5" stroke="#cdcdcd" stroke-width="1" stroke-dasharray="1 2"/><line x1="520" y1="580.5" x2="1278" y2="580.5" stroke="#cdcdcd" stroke-width="1" stroke-dasharray="1 2"/><line x1="530.5" y1="575" x2="530.5" y2="731" stroke="#f0a8a8" stroke-width="1" stroke-dasharray="1 2"/><line x1="655.5" y1="575" x2="655.5" y2="731" stroke="#f0a8a8" stroke-width="1" stroke-dasharray="1 2"/><line x1="780.5" y1="575" x2="780.5" y2="731" stroke="#f0a8a8" stroke-width="1" stroke-dasharray="1 2"/><line x1="905.5" y1="575" x2="905.5" y2="731" stroke="#f0a8a8" stroke-width="1" stroke-dasharray="1 2"/><line x1="1029.5" y1="575" x2="1029.5" y2="731" stroke="#f0a8a8" stroke-width="1" stroke-dasharray="1 2"/><line x1="1154.5" y1="575" x2="1154.5" y2="731" stroke="#f0a8a8" stroke-width="1" stroke-dasharray="1 2"/><line x1="520" y1="666.5" x2="1278" y2="666.5" stroke="#f0a8a8" stroke-width="1" stroke-dasharray="1 2"/><line x1="520" y1="605.5" x2="1278" y2="605.5" stroke="#f0a8a8" stroke-width="1" stroke-dasharray="1 2"/><path d="M746.8 727.2 L748.6 712 L750.6 711.5 L753.2 727.2Z" fill="#00c800"/><path d="M746.2 727.2 L748.2 690.8 L751 711 L753.3 727.2" fill="none" stroke="#5a5aff" stroke-width="1.4" stroke-linejoin="round"/><path d="M812 727.2 L813.4 634.2 L817.5 635.2 L820 727.2Z" fill="#00c800"/><path d="M811.3 727.2 L812.4 630.7 L814.6 635.7 L817.4 635.7 L820.4 727.2" fill="none" stroke="#5a5aff" stroke-width="1.4" stroke-linejoin="round"/><path d="M1019 727.2 L1021 677.2 L1023.6 727.2Z" fill="#00c800"/><path d="M1018.3 727.2 L1021 653.7 L1024.2 727.2" fill="none" stroke="#5a5aff" stroke-width="1.4" stroke-linejoin="round"/><path d="M1067.8 727.2 L1070 699.2 L1072.7 696.2 L1074.5 727.2Z" fill="#00c800"/><path d="M1067.3 727.2 L1069 659.8 L1072.7 696 L1074.5 727.2" fill="none" stroke="#5a5aff" stroke-width="1.4" stroke-linejoin="round"/><path d="M1259.2 727.2 L1261.2 607.2 L1266.3 727.2Z" fill="#00c800"/><path d="M1258.8 727.2 L1261.4 576.9 L1266.5 727.2" fill="none" stroke="#5a5aff" stroke-width="1.4" stroke-linejoin="round"/><rect x="525.5" y="726.5" width="750" height="2" fill="#1d4f86"/><rect x="525.5" y="728.5" width="750" height="1" fill="#3a8a3a" opacity="0.8"/><rect x="523.8" y="574" width="1.6" height="158.5" fill="#4a4a4a"/><path d="M520.5 575.6 L530.1 575.6 L525.3 567.8Z" fill="#7a1414"/><rect x="519" y="727.0" width="763" height="1.4" fill="#4a4a4a" opacity="0.6"/><path d="M1279 722.9 L1279 732.1 L1286.5 727.5Z" fill="#7a1414"/><text x="486.1" y="609.1" font-family="Liberation Mono" font-size="13.7" textLength="28.2" lengthAdjust="spacingAndGlyphs" fill="#1c1c1c" text-anchor="start">200</text><text x="486.1" y="670.3" font-family="Liberation Mono" font-size="13.7" textLength="28.2" lengthAdjust="spacingAndGlyphs" fill="#1c1c1c" text-anchor="start">100</text><text transform="translate(434.6,653.0) rotate(-90)" font-family="Liberation Mono" font-size="15.5" textLength="111" lengthAdjust="spacingAndGlyphs" fill="#1c1c1c" text-anchor="middle">packets/sec</text><text x="490.3" y="746.0" font-family="Liberation Mono" font-size="13.7" textLength="84.6" lengthAdjust="spacingAndGlyphs" fill="#1c1c1c" text-anchor="start">Sat&#160;00:00</text><text x="739.7" y="746.0" font-family="Liberation Mono" font-size="13.7" textLength="84.6" lengthAdjust="spacingAndGlyphs" fill="#1c1c1c" text-anchor="start">Sat&#160;12:00</text><text x="989.8" y="746.0" font-family="Liberation Mono" font-size="13.7" textLength="84.6" lengthAdjust="spacingAndGlyphs" fill="#1c1c1c" text-anchor="start">Sun&#160;00:00</text></g></svg>
<svg style="left:1560px;top:1000px" width="56" height="63" viewBox="1560 1000 56 63"><circle cx="1619.2" cy="1063.8" r="26.5" fill="none" stroke="#1a1a1a" stroke-width="1.3" stroke-dasharray="3.2 3.3"/></svg>
</body></html>
